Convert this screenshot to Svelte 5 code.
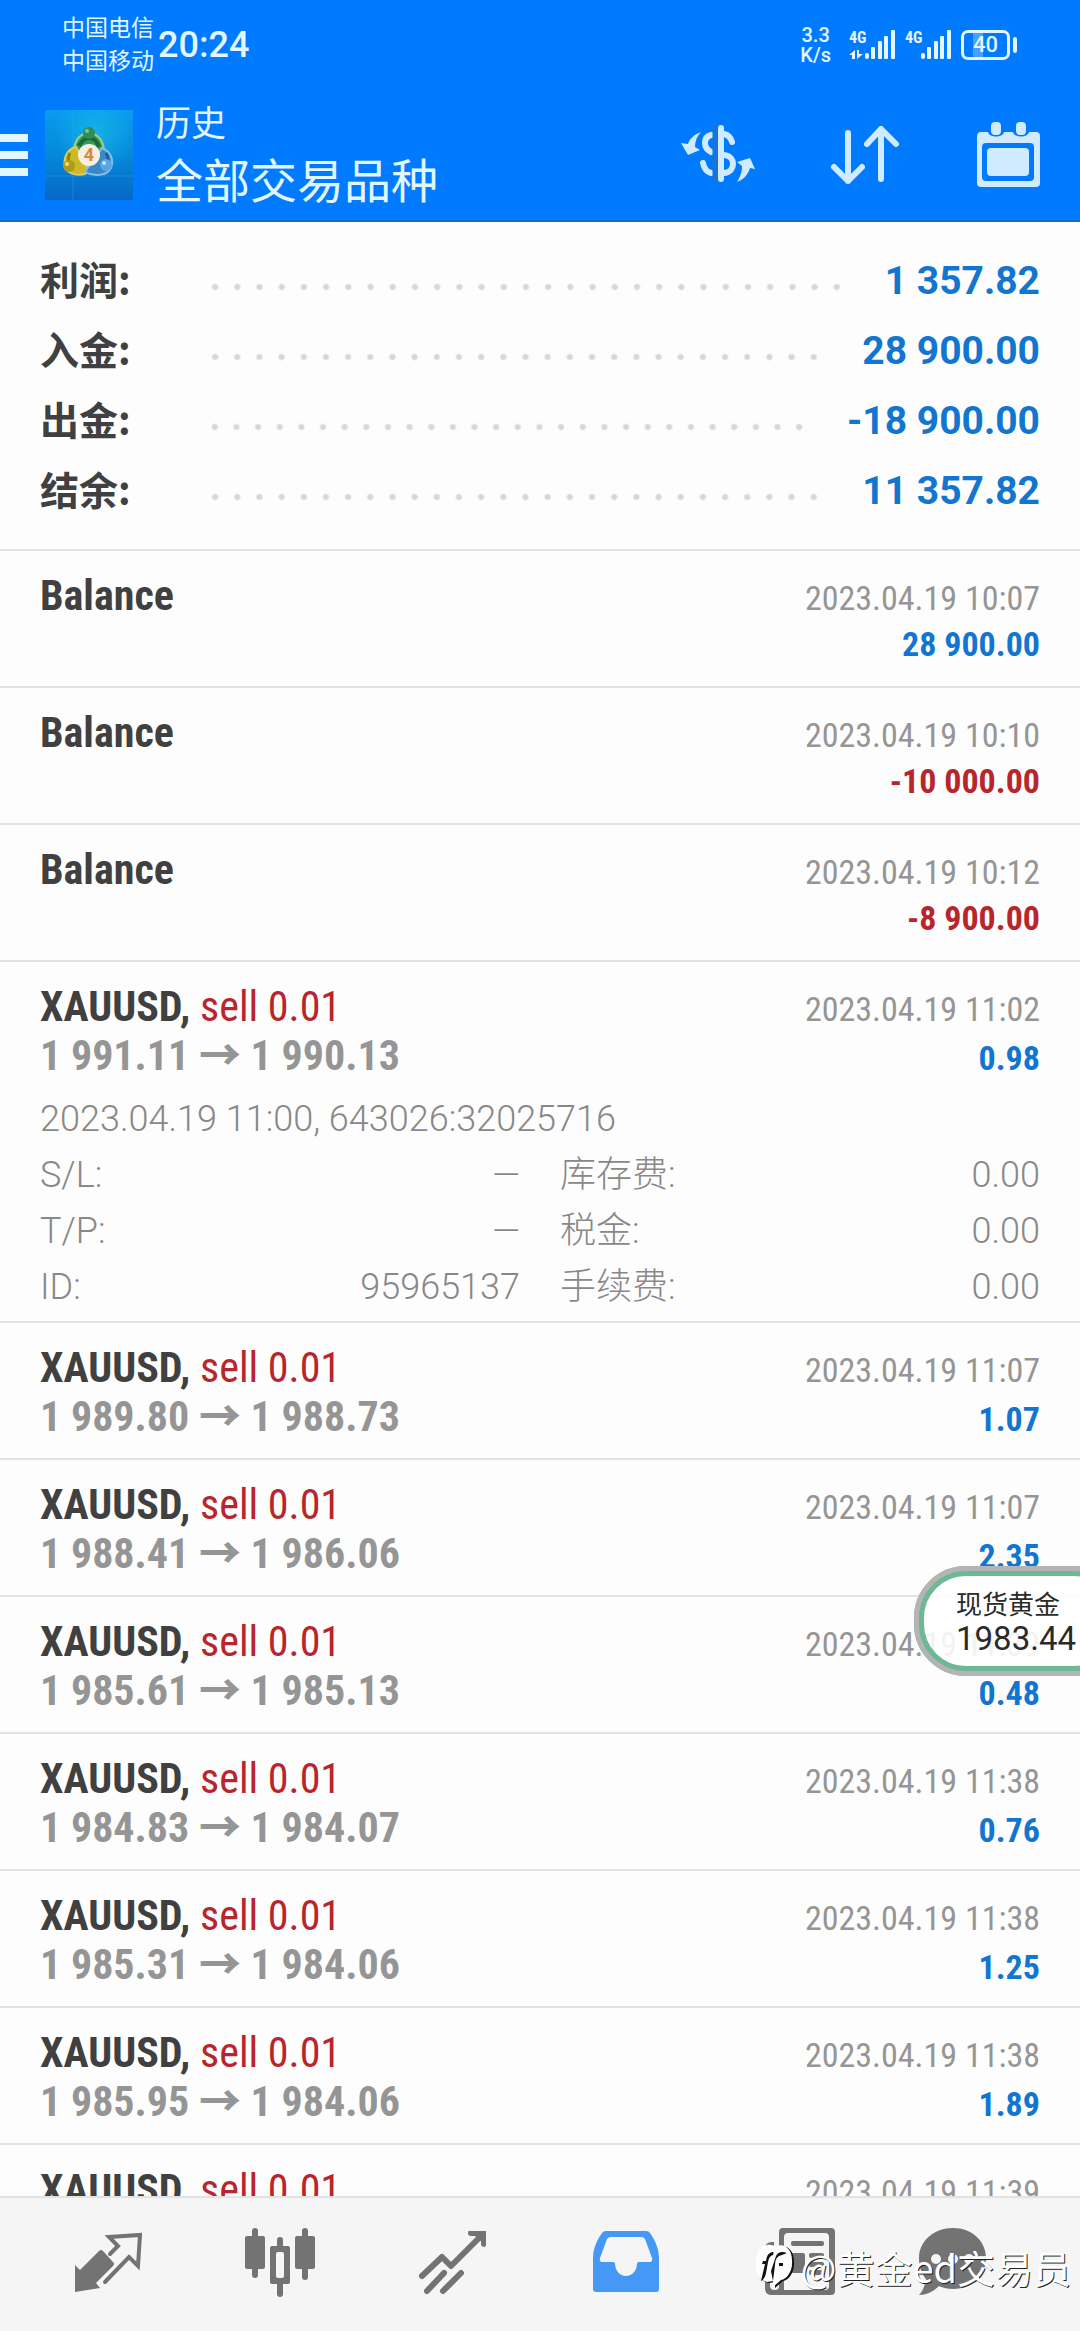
<script lang="ts">
  type Entry = {
    symbol: string;
    side?: string;
    open?: string;
    close?: string;
    time: string;
    profit: string;
    expanded?: boolean;
  };

  const summary = [
    { label: "利润:", value: "1 357.82" },
    { label: "入金:", value: "28 900.00" },
    { label: "出金:", value: "-18 900.00" },
    { label: "结余:", value: "11 357.82" },
  ];

  const entries: Entry[] = [
    { symbol: "Balance", time: "2023.04.19 10:07", profit: "28 900.00" },
    { symbol: "Balance", time: "2023.04.19 10:10", profit: "-10 000.00" },
    { symbol: "Balance", time: "2023.04.19 10:12", profit: "-8 900.00" },
    { symbol: "XAUUSD", side: "sell 0.01", open: "1 991.11", close: "1 990.13", time: "2023.04.19 11:02", profit: "0.98", expanded: true },
    { symbol: "XAUUSD", side: "sell 0.01", open: "1 989.80", close: "1 988.73", time: "2023.04.19 11:07", profit: "1.07" },
    { symbol: "XAUUSD", side: "sell 0.01", open: "1 988.41", close: "1 986.06", time: "2023.04.19 11:07", profit: "2.35" },
    { symbol: "XAUUSD", side: "sell 0.01", open: "1 985.61", close: "1 985.13", time: "2023.04.19 11:39", profit: "0.48" },
    { symbol: "XAUUSD", side: "sell 0.01", open: "1 984.83", close: "1 984.07", time: "2023.04.19 11:38", profit: "0.76" },
    { symbol: "XAUUSD", side: "sell 0.01", open: "1 985.31", close: "1 984.06", time: "2023.04.19 11:38", profit: "1.25" },
    { symbol: "XAUUSD", side: "sell 0.01", open: "1 985.95", close: "1 984.06", time: "2023.04.19 11:38", profit: "1.89" },
    { symbol: "XAUUSD", side: "sell 0.01", time: "2023.04.19 11:39", profit: "" },
  ];

  const details = [
    { label: "S/L:", value: "—" },
    { label: "库存费:", value: "0.00" },
    { label: "T/P:", value: "—" },
    { label: "税金:", value: "0.00" },
    { label: "ID:", value: "95965137" },
    { label: "手续费:", value: "0.00" },
  ];
</script>

{#snippet signal()}
  <svg width="30" height="30" viewBox="0 0 30 30" aria-hidden="true">
    <rect x="0" y="23" width="4" height="6" rx="2" />
    <rect x="6" y="17" width="4" height="12" rx="1" />
    <rect x="13" y="11" width="4" height="18" rx="1" />
    <rect x="19" y="6" width="4" height="23" rx="1" />
    <rect x="26" y="0" width="4" height="29" rx="1" />
  </svg>
{/snippet}

<div class="app">
  <header>
    <div class="status">
      <div class="carriers">
        <span>中国电信</span>
        <span>中国移动</span>
      </div>
      <time class="clock">20:24</time>
      <div class="indicators">
        <div class="speed"><span>3.3</span><span>K/s</span></div>
        <div class="network">
          <div class="gen">
            <span>4G</span>
            <svg width="14" height="10" viewBox="0 0 14 10" aria-hidden="true">
              <path d="M0 5 6 0V9H3V5ZM8 0H10V4H14L8 9Z" />
            </svg>
          </div>
          {@render signal()}
        </div>
        <div class="network">
          <div class="gen"><span>4G</span></div>
          {@render signal()}
        </div>
        <div class="battery"><span>40</span></div>
      </div>
    </div>

    <div class="bar">
      <button class="menu" aria-label="Menu"><i></i><i></i><i></i></button>
      <svg class="logo" viewBox="0 0 88 90" aria-hidden="true">
        <defs>
          <linearGradient id="logo-bg" x1="0" y1="0" x2="0" y2="1">
            <stop offset="0" stop-color="#0a9bf0" />
            <stop offset="0.5" stop-color="#0588d8" />
            <stop offset="1" stop-color="#0667c8" />
          </linearGradient>
          <radialGradient id="logo-glow">
            <stop offset="0" stop-color="#1cc6e6" />
            <stop offset="1" stop-color="#1cc6e6" stop-opacity="0" />
          </radialGradient>
        </defs>
        <rect width="88" height="90" fill="url(#logo-bg)" />
        <circle cx="50" cy="24" r="40" fill="url(#logo-glow)" opacity="0.6" />
        <path d="M28 0v90M0 66h88" stroke="#3aa8f0" stroke-width="1" opacity="0.4" />
        <path d="M29 40c1-12 8-17 15-17s14 6 15 17l-3 9H34z" fill="#3c9a58" stroke="#a4ce8c" stroke-width="2" />
        <path d="M34 36c3-6 6-8 10-8s8 3 10 9" fill="none" stroke="#196b3c" stroke-width="4" />
        <path d="M31 37c-9 2-13 11-11 20 3 7 12 9 20 7l4-4z" fill="#cdb826" stroke="#d8cc62" stroke-width="2" />
        <path d="M25 43c-3 5-2 11 3 16" fill="none" stroke="#8d8417" stroke-width="3" />
        <path d="M57 38c9 4 12 12 9 20-4 8-17 9-26 4l4-6z" fill="#3989c8" stroke="#86bfe6" stroke-width="2" />
        <path d="M61 43c4 6 2 12-5 15" fill="none" stroke="#1d5f9c" stroke-width="3" />
        <circle cx="44" cy="23" r="6" fill="#2f8d55" />
        <circle cx="42" cy="21" r="2" fill="#7cc98f" />
        <circle cx="24" cy="56" r="6" fill="#b09a1c" />
        <circle cx="22" cy="54" r="2" fill="#ece07c" />
        <circle cx="61" cy="55" r="6" fill="#5ba6e0" />
        <circle cx="59" cy="53" r="2" fill="#c4e6fa" />
        <circle cx="44" cy="45" r="11" fill="#f7efe4" />
        <text x="44" y="51" text-anchor="middle">4</text>
      </svg>
      <div class="titles">
        <p>历史</p>
        <h1>全部交易品种</h1>
      </div>
      <div class="actions">
        <button aria-label="Currency">
          <svg width="76" height="66" viewBox="0 0 76 66">
            <path d="M21 10C15 12 9 17 8 22L1 21 8 33 20 28 15 25C15 19 17 14 21 10Z" />
            <path d="M57 60C60 55 62 51 62 44L57 40 70 36 75 47 70 46C68 53 63 58 57 60Z" />
            <rect x="38" y="3" width="6" height="57" rx="3" />
            <path class="stroke" d="M31 13C23 15 23 26 31 30M23 41C24 46 27 50 31 51M44 12C49 13 51 16 52 20M44 33C56 34 56 50 44 51" />
            <path class="gap" d="M35 4V62" />
          </svg>
        </button>
        <button aria-label="Sort">
          <svg width="74" height="66" viewBox="0 0 74 66">
            <path class="stroke" d="M19 11V59M5 45 19 59 33 45M52 57V7M38 22 52 7 67 22" />
          </svg>
        </button>
        <button aria-label="Period">
          <svg width="65" height="66" viewBox="0 0 65 66">
            <path fill-rule="evenodd" d="M5 10H12C13 16 27 16 28 10H37C38 16 52 16 53 10H60Q64 10 64 14V61Q64 65 60 65H5Q1 65 1 61V14Q1 10 5 10ZM10 21Q6 21 6 25V55Q6 59 10 59H54Q58 59 58 55V25Q58 21 54 21Z" />
            <rect x="11" y="26" width="42" height="28" rx="4" />
            <rect x="15" y="0" width="10" height="13" rx="4" />
            <rect x="40" y="0" width="10" height="13" rx="4" />
          </svg>
        </button>
      </div>
    </div>
  </header>

  <main>
    <dl class="summary">
      {#each summary as item}
        <div>
          <dt>{item.label}</dt>
          <dd class="leader" aria-hidden="true"></dd>
          <dd class="total">{item.value}</dd>
        </div>
      {/each}
    </dl>

    <ul class="entries">
      {#each entries as entry}
        <li class:expanded={entry.expanded}>
          <div class="line">
            <span>
              {entry.symbol}{#if entry.side}, <em>{entry.side}</em>{/if}
            </span>
            <time>{entry.time}</time>
          </div>
          <div class="line">
            <span class="prices">
              {#if entry.open}{entry.open} <b>→</b> {entry.close}{/if}
            </span>
            <span class="profit" class:loss={entry.profit.startsWith("-")}>{entry.profit}</span>
          </div>
          {#if entry.expanded}
            <p class="opened">2023.04.19 11:00, 643026:32025716</p>
            <dl class="details">
              {#each details as detail}
                <div><dt>{detail.label}</dt><dd>{detail.value}</dd></div>
              {/each}
            </dl>
          {/if}
        </li>
      {/each}
    </ul>
  </main>

  <nav>
    <a href="#quotes" aria-label="Quotes">
      <svg viewBox="0 0 72 72">
        <path d="M4 39 9 44 28 25Q30 23 32 25L42 36Q44 38 42 40L25 57 29 62 4 66Z" />
        <path class="stroke thin" d="M39 28 47 20 38 11 69 9 67 40 58 31 34 56" />
      </svg>
    </a>
    <a href="#chart" aria-label="Chart">
      <svg viewBox="0 0 72 72">
        <rect x="1" y="10" width="20" height="33" rx="2" />
        <rect x="8" y="2" width="6" height="50" rx="3" />
        <rect x="51" y="10" width="20" height="33" rx="2" />
        <rect x="58" y="2" width="6" height="52" rx="3" />
        <rect x="33" y="11" width="6" height="60" rx="3" />
        <rect x="26" y="20" width="20" height="38" rx="2" />
        <rect class="hole" x="32" y="26" width="8" height="26" rx="2" />
      </svg>
    </a>
    <a href="#trade" aria-label="Trade">
      <svg viewBox="0 0 72 72">
        <path class="stroke" d="M5 50 25 31 34 40 65 9M10 65 27 47M26 65 44 47" />
        <path d="M53 5H69V19Q69 21 67 21T64 19V15L58 10H54Q51 10 51 7T53 5Z" />
      </svg>
    </a>
    <a href="#history" class="active" aria-label="History" aria-current="page">
      <svg viewBox="0 0 72 72">
        <path fill-rule="evenodd" d="M16 5H56Q59 5 60 7C65 14 69 23 69 32V63Q69 66 66 66H6Q3 66 3 63V32C3 23 7 14 12 7Q13 5 16 5ZM21 11Q18 11 17 13L10 32Q9 36 13 36H23Q25 36 25 38C26 54 46 54 47 38Q47 36 49 36H59Q63 36 62 32L55 13Q54 11 51 11Z" />
      </svg>
    </a>
    <a href="#news" aria-label="News">
      <svg viewBox="0 0 72 72">
        <path fill-rule="evenodd" d="M20 2H68Q72 2 72 6V65Q72 69 68 69H8Q2 69 2 62V23Q2 16 9 16H11V21Q7 22 7 26V60Q7 64 12 64Q16 64 16 60V6Q16 2 20 2ZM25 7Q21 7 21 11V64H62Q66 64 66 60V11Q66 7 62 7Z" />
        <rect x="28" y="15" width="33" height="5" rx="2" />
        <rect x="28" y="27" width="14" height="20" rx="2" />
        <rect x="46" y="27" width="15" height="5" rx="2" />
        <rect x="46" y="36" width="15" height="5" rx="2" />
        <rect x="46" y="44" width="15" height="5" rx="2" />
      </svg>
    </a>
    <a href="#messages" aria-label="Messages">
      <svg viewBox="0 0 72 72">
        <path d="M37 2C56 2 70 15 70 32S56 63 37 63C32 63 27 62 23 60C17 66 10 69 3 69C7 65 9 59 10 53C5 47 3 40 3 32C3 15 18 2 37 2Z" />
        <circle class="hole" cx="20" cy="33" r="5" />
        <circle class="hole" cx="37" cy="33" r="5" />
        <circle class="hole" cx="53" cy="33" r="5" />
      </svg>
    </a>
  </nav>

  <aside class="ticker">
    <span>现货黄金</span>
    <strong>1983.44</strong>
  </aside>

  <div class="watermark">
    <svg width="40" height="46" viewBox="0 0 40 46" aria-hidden="true">
      <path d="M14 2C18 1 21 3 24 3C32 0 39 7 39 17C40 28 34 36 28 37L20 44V38L14 39C4 37 0 28 2 18C3 9 7 3 14 2Z" fill="#111" />
      <path d="M12 1C16 0 19 2 22 2C30-1 37 6 37 16C38 27 32 35 26 36L18 43V37L12 38C3 36-1 27 1 17C2 8 5 2 12 1Z" fill="#fff" />
      <path d="M15 9Q20 6 18 11Q14 12 13 18L11 29Q10 35 6 37L10 20H7L8 17H11Q12 10 15 9ZM32 9Q24 6 21 12L16 27 18 37 20 21Q20 12 27 11ZM24 19H28V22H24Z" fill="#111" />
    </svg>
    <span>@黄金ed交易员</span>
  </div>
</div>

<style>
  :global(body) {
    background: #fdfdfd;
  }

  .app {
    --sans: Roboto, "Noto Sans CJK SC", sans-serif;
    --condensed: "Roboto Condensed", "Liberation Sans Narrow", Roboto, "Noto Sans CJK SC", sans-serif;
    --cjk: "Noto Sans CJK SC", sans-serif;
    --blue: #1276d0;
    --red: #b8262c;
    --grey: #959595;
    --rule: #e2e2e2;
    position: relative;
    display: flex;
    flex-direction: column;
    height: 100vh;
    overflow: hidden;
    color: #404040;
    font-family: var(--sans);
  }

  p,
  h1,
  ul,
  dl,
  dd {
    margin: 0;
    padding: 0;
  }

  button {
    padding: 0;
    border: 0;
    background: none;
  }

  svg {
    display: block;
  }

  .stroke {
    fill: none;
    stroke-width: 6;
    stroke-linecap: round;
    stroke-linejoin: round;
  }

  /* header */

  header {
    flex: none;
    border-bottom: 2px solid #1668c4;
    background: #007aff;
    color: #e2f6ff;
  }

  .status {
    display: flex;
    align-items: center;
    height: 90px;
    padding: 0 62px;
  }

  .carriers,
  .speed,
  .gen {
    display: flex;
    flex-direction: column;
  }

  .carriers {
    font-size: 23px;
    line-height: 33px;
  }

  .clock {
    margin-left: 4px;
    font-size: 36px;
    font-weight: 500;
  }

  .indicators {
    display: flex;
    align-items: center;
    gap: 10px;
    margin-left: auto;
  }

  .speed {
    margin-right: 8px;
    font-size: 20px;
    font-weight: 500;
    line-height: 20px;
    text-align: center;
  }

  .network {
    display: flex;
    height: 30px;
  }

  .gen {
    gap: 4px;
    width: 16px;
    font: 700 16px/16px var(--condensed);
  }

  .status svg {
    fill: currentColor;
  }

  .battery {
    position: relative;
    margin-right: 8px;
    padding: 0 9px;
    border: 3px solid;
    border-radius: 7px;
    background: linear-gradient(90deg, #4aa0ff 40%, transparent 40%) content-box;
    font-size: 22px;
    font-weight: 500;
    line-height: 24px;
  }

  .battery::after {
    content: "";
    position: absolute;
    top: 4px;
    right: -10px;
    width: 4px;
    height: 16px;
    border-radius: 2px;
    background: currentColor;
  }

  .bar {
    display: flex;
    align-items: center;
    height: 130px;
    padding-right: 39px;
  }

  .menu {
    display: flex;
    flex-direction: column;
    gap: 9px;
  }

  .menu i {
    width: 28px;
    height: 8px;
    background: #e2f6ff;
  }

  .logo {
    width: 88px;
    height: 90px;
    margin: 0 23px 0 17px;
  }

  .logo text {
    fill: #e0863a;
    font: 700 18px var(--sans);
  }

  .titles p {
    font-size: 35px;
    line-height: 54px;
  }

  .titles h1 {
    font-size: 47px;
    font-weight: 400;
    line-height: 60px;
  }

  .actions {
    display: flex;
    gap: 73px;
    margin-left: auto;
  }

  .actions svg {
    fill: #d0eaff;
  }

  .actions .stroke {
    fill: none;
    stroke: #d0eaff;
  }

  .actions .gap {
    stroke: #1a73d8;
    stroke-width: 5;
  }

  /* account totals */

  main {
    flex: 1;
    min-height: 0;
    overflow: hidden;
  }

  .summary {
    padding: 24px 40px 23px;
    border-bottom: 2px solid var(--rule);
  }

  .summary div {
    display: flex;
    align-items: center;
    font-size: 39px;
    font-weight: 700;
    line-height: 70px;
  }

  .summary dt {
    width: 164px;
    height: 70px;
    font-family: var(--cjk);
    line-height: 64px;
  }

  .leader {
    flex: 1;
    height: 22px;
    margin: 12px 37px 0 0;
    background: radial-gradient(circle, #d6d6d6 2px, transparent 4px) 0 0 / 22px 22px round;
  }

  .total {
    color: var(--blue);
  }

  /* history list */

  .entries {
    list-style: none;
  }

  li {
    padding: 21px 40px 18px;
    border-bottom: 2px solid var(--rule);
  }

  li.expanded {
    padding-bottom: 6px;
  }

  .line {
    display: flex;
    justify-content: space-between;
    align-items: baseline;
    height: 48px;
    font: 700 42px/48px var(--condensed);
  }

  .line em {
    color: var(--red);
    font-style: normal;
    font-weight: 400;
  }

  .line time {
    color: var(--grey);
    font-size: 34px;
    font-weight: 400;
  }

  .prices {
    color: var(--grey);
  }

  .prices b {
    font-family: var(--cjk);
    line-height: 1;
  }

  .profit {
    color: var(--blue);
    font-size: 34px;
  }

  .profit.loss {
    color: var(--red);
  }

  .opened,
  .details {
    color: #888;
    font-size: 36px;
    font-weight: 300;
    line-height: 56px;
  }

  .opened {
    margin-top: 12px;
  }

  .details {
    display: grid;
    grid-template-columns: 1fr 1fr;
    column-gap: 40px;
  }

  .details div {
    display: flex;
    justify-content: space-between;
    height: 56px;
  }

  /* bottom tabs */

  nav {
    display: grid;
    flex: none;
    grid-template-columns: repeat(5, 173fr) 132fr;
    align-items: center;
    justify-items: center;
    box-sizing: border-box;
    height: 135px;
    padding: 0 62px 5px 20px;
    border-top: 2px solid var(--rule);
    background: #f5f5f5;
  }

  nav svg {
    width: 72px;
    height: 72px;
    fill: #737373;
  }

  nav .stroke {
    fill: none;
    stroke: #737373;
  }

  nav .thin {
    stroke-width: 4;
    stroke-linejoin: miter;
  }

  nav .hole {
    fill: #f5f5f5;
  }

  nav .active svg {
    fill: #4598f5;
  }

  /* floating quote, partly off the right edge */

  .ticker {
    position: absolute;
    top: 1566px;
    right: -46px;
    display: flex;
    flex-direction: column;
    box-sizing: border-box;
    width: 212px;
    height: 110px;
    padding: 12px 0 0 32px;
    border: 10px solid #6cb993;
    border-radius: 52px;
    outline: 5px solid #b4b4b4;
    outline-offset: -5px;
    background: rgb(255 255 255 / 0.88);
    color: #2a2a2a;
  }

  .ticker span {
    font-size: 26px;
    line-height: 34px;
  }

  .ticker strong {
    font-size: 33px;
    font-weight: 400;
    line-height: 34px;
  }

  .watermark {
    position: absolute;
    right: 9px;
    bottom: 40px;
    display: flex;
    align-items: center;
    gap: 5px;
    color: #fff;
    font-family: var(--cjk);
    font-size: 38px;
    font-weight: 400;
    line-height: 48px;
    text-shadow: 1px 1px 0 #222;
  }
</style>
